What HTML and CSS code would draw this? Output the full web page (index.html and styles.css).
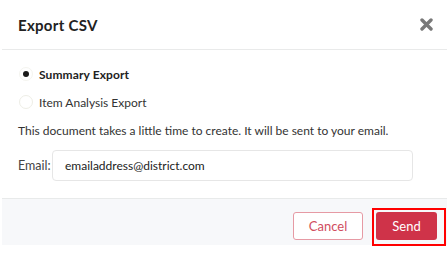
FILE: index.html
```html
<!DOCTYPE html>
<html>
<head>
<meta charset="utf-8">
<link rel="stylesheet" href="styles.css">
</head>
<body>
<div class="modal">
  <div class="modal-header">
    <h2 class="title">Export CSV</h2>
    <button class="close" aria-label="Close">
      <svg width="13" height="13" viewBox="0 0 13 13"><path d="M2 2L11 11M11 2L2 11" stroke="#787878" stroke-width="3.4" stroke-linecap="round"/></svg>
    </button>
  </div>
  <div class="modal-body">
    <label class="radio-row">
      <span class="radio checked"></span>
      <span class="radio-label bold">Summary Export</span>
    </label>
    <label class="radio-row">
      <span class="radio"></span>
      <span class="radio-label">Item Analysis Export</span>
    </label>
    <p class="note">This document takes a little time to create. It will be sent to your email.</p>
    <div class="email-row">
      <span class="email-label">Email:</span>
      <div class="input">emailaddress@district.com</div>
    </div>
  </div>
  <div class="modal-footer">
    <button class="btn btn-cancel">Cancel</button>
    <div class="focus-ring"><button class="btn btn-send">Send</button></div>
  </div>
</div>
</body>
</html>
```
FILE: styles.css
```css
* { box-sizing: border-box; }
html, body { margin: 0; padding: 0; background: #fff; }
body {
  font-family: Lato, "Open Sans", sans-serif;
  color: #333;
  width: 447px;
  height: 253px;
  overflow: hidden;
}
.modal {
  margin-left: 2px;
  width: 445px;
}
.modal-header {
  height: 50px;
  border-bottom: 1px solid #e9eaea;
  display: flex;
  align-items: center;
  justify-content: space-between;
  padding: 0 14px 0 16px;
}
.title {
  margin: 0;
  font-size: 15px;
  font-weight: 700;
  color: #222;
  letter-spacing: 0.3px;
}
.close {
  border: 0;
  background: none;
  padding: 0;
  width: 13px;
  height: 13px;
  display: block;
}
.close svg { display: block; }
.modal-body {
  padding: 17px 16px 17px 16px;
}
.radio-row {
  display: flex;
  align-items: center;
  height: 14px;
  margin-bottom: 14px;
}
.radio {
  width: 14px;
  height: 14px;
  border-radius: 50%;
  border: 1px solid #eeeee6;
  background: #fff;
  margin-left: 1px;
  margin-right: 6px;
  position: relative;
  flex: none;
}
.radio.checked { border-color: #f4f4ef; }
.radio.checked::after {
  content: "";
  position: absolute;
  left: 3px;
  top: 3px;
  width: 6px;
  height: 6px;
  border-radius: 50%;
  background: #1a1a1a;
}
.radio-label {
  font-size: 12px;
  color: #333;
}
.radio-label.bold { font-weight: 700; color: #222; letter-spacing: 0.1px; }
.note {
  margin: 13px 0 11px 0;
  font-size: 12px;
  color: #333;
  line-height: 16px;
}
.email-row {
  display: flex;
  align-items: center;
}
.email-label {
  font-size: 12.5px;
  color: #444;
  width: 34px;
  flex: none;
}
.input {
  width: 361px;
  height: 31px;
  border: 1px solid #e6e6e6;
  border-radius: 4px;
  padding: 0 12px;
  display: flex;
  align-items: center;
  font-size: 12px;
  color: #222;
}
.modal-footer {
  border-top: 1px solid #e8eaea;
  background: #f7f8fa;
  height: 47px;
  display: flex;
  align-items: flex-start;
  justify-content: flex-end;
  padding: 9px 1px 0 0;
}
.btn {
  font-family: Lato, "Open Sans", sans-serif;
  font-size: 13px;
  height: 28px;
  border-radius: 3px;
  cursor: pointer;
}
.btn-cancel {
  width: 70px;
  border: 1px solid #e69aa4;
  background: #fff;
  color: #d14d5e;
  margin-top: 4px;
  margin-right: 9px;
}
.focus-ring {
  border: 2px solid #ff0000;
  padding: 2px 7px 4px 2px;
}
.btn-send {
  display: block;
  width: 61px;
  border: 0;
  background: #cf3349;
  color: #fff;
}
```
